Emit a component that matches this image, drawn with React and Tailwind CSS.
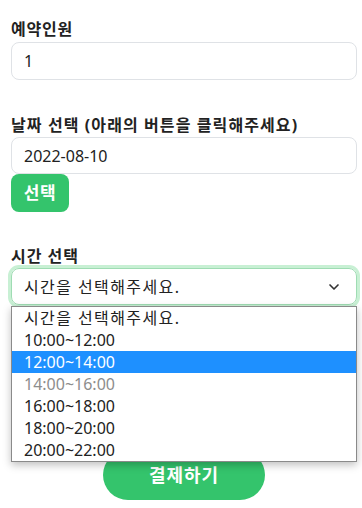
import { ChevronDown } from 'lucide-react'

const times = ['10:00~12:00', '12:00~14:00', '14:00~16:00', '16:00~18:00', '18:00~20:00', '20:00~22:00']

export default function App() {
  return (
    <div
      className="relative min-h-[508px] bg-white pl-[11px] pr-[5px] pt-[17px] text-[#222]"
      style={{ fontFamily: '"Noto Sans", "Noto Sans CJK KR", sans-serif' }}
    >
      {/* 예약인원 */}
      <label className="block text-base font-bold leading-6 tracking-[0.8px]">예약인원</label>
      <input
        readOnly
        value="1"
        className="mt-px block h-[38px] w-full rounded-lg border border-[#dfe2e6] px-3 text-base text-[#222] outline-none"
      />

      {/* 날짜 선택 */}
      <label className="mt-[33px] block text-base font-bold leading-6 tracking-[1.1px]">
        날짜 선택 (아래의 버튼을 클릭해주세요)
      </label>
      <input
        readOnly
        value="2022-08-10"
        className="block h-[37px] w-full rounded-lg border border-[#dfe2e6] px-3 text-base text-[#222] outline-none"
      />
      <button className="h-[38px] w-[58px] rounded-lg bg-[#34c46c] text-[17px] font-bold tracking-[0.5px] text-white">
        선택
      </button>

      {/* 시간 선택 */}
      <label className="mt-[32px] block text-base font-bold leading-6 tracking-[1px]">시간 선택</label>
      <div className="relative">
        <div className="flex h-[37px] w-full items-center justify-between rounded-lg border border-[#9fdcb3] px-3 text-base shadow-[0_0_0_3px_#c8f0d4]">
          <span className="tracking-[1.4px]">시간을 선택해주세요.</span>
          <ChevronDown className="mr-[2px] h-4 w-4 text-[#333]" strokeWidth={2.5} />
        </div>

        {/* 열린 옵션 목록 */}
        <ul className="absolute left-0 right-0 top-[38px] z-10 border border-[#8a8a8a] bg-white text-base shadow-[0_3px_8px_rgba(0,0,0,0.25)]">
          <li className="h-[22px] pl-3 leading-[22px] tracking-[1.4px]">시간을 선택해주세요.</li>
          {times.map(t => (
            <li
              key={t}
              className={`h-[22px] pl-3 leading-[22px] ${
                t === '12:00~14:00' ? 'bg-[#1e90ff] text-white' : t === '14:00~16:00' ? 'text-[#8d8d8d]' : ''
              }`}
            >
              {t}
            </li>
          ))}
        </ul>
      </div>

      {/* 결제하기 */}
      <div className="flex justify-center pt-[145px]">
        <button className="h-[50px] w-[162px] rounded-full bg-[#34c46c] text-lg font-bold tracking-[1px] text-white">
          결제하기
        </button>
      </div>
    </div>
  )
}
